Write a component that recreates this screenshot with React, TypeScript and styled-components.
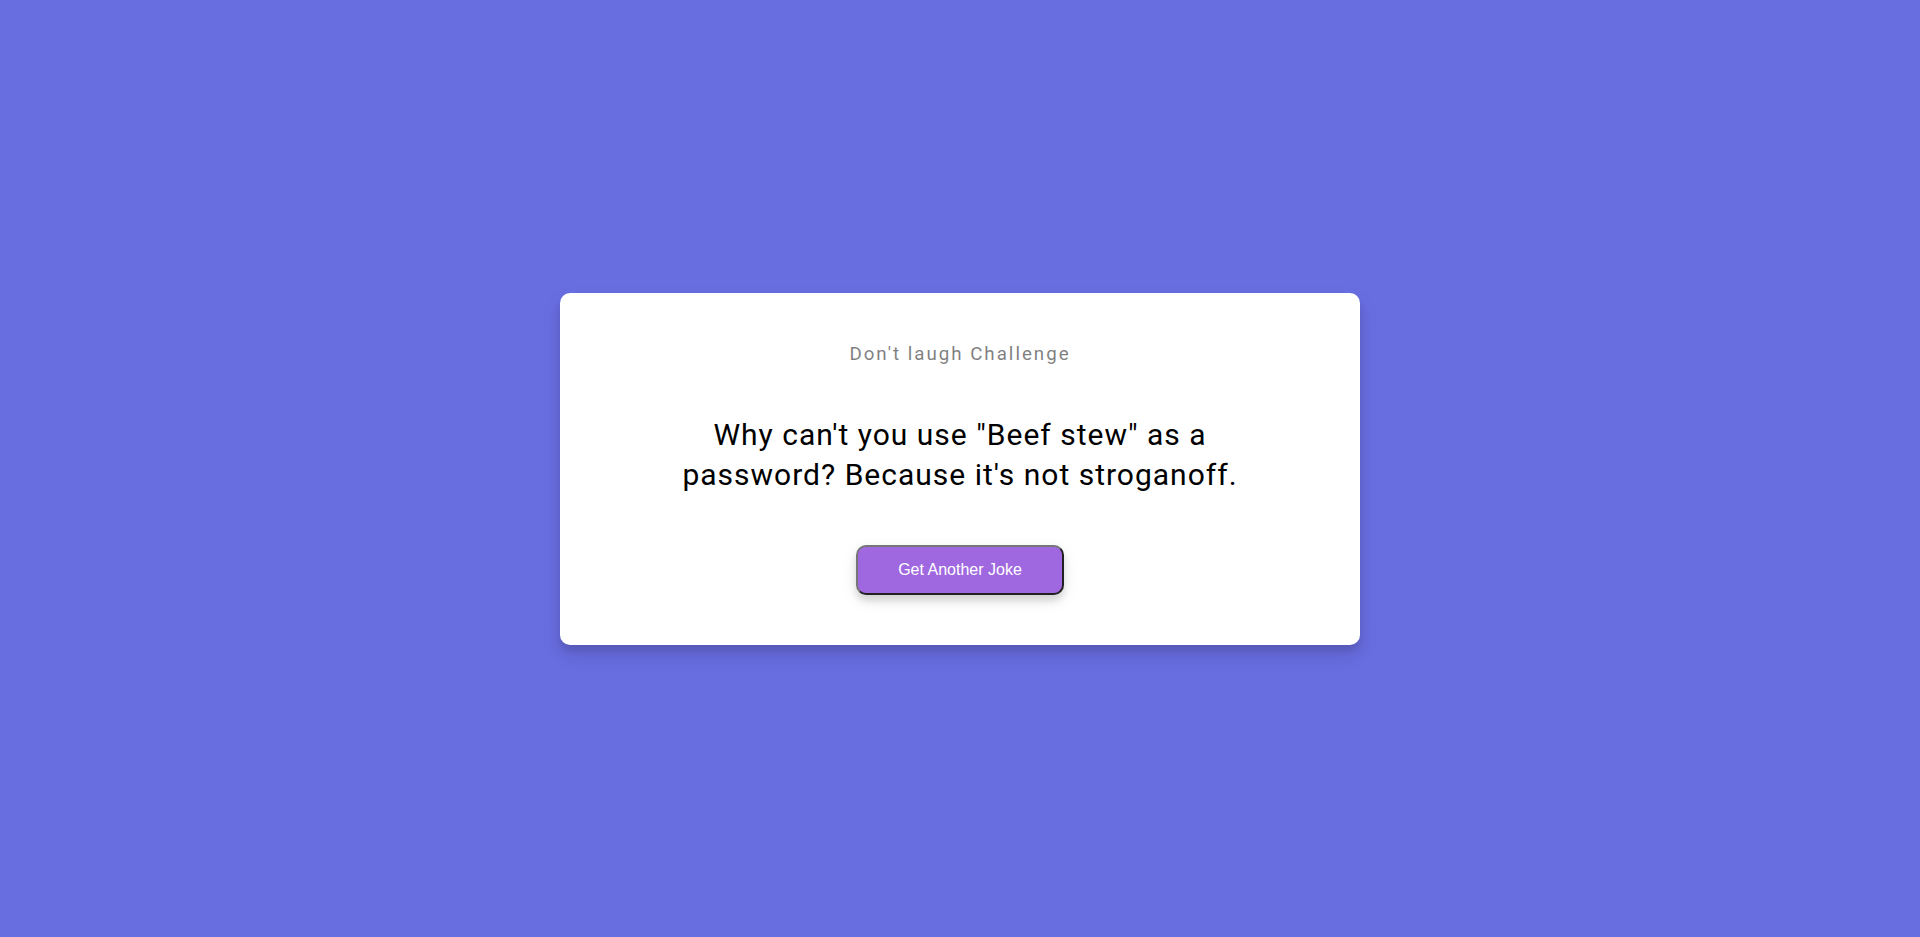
import React from "react";
import styled, { createGlobalStyle } from "styled-components";

const GlobalStyle = createGlobalStyle`
  * { box-sizing: border-box; }
  body {
    background-color: #686de0;
    font-family: Roboto, "Noto Sans", sans-serif;
    display: flex;
    flex-direction: column;
    align-items: center;
    justify-content: center;
    height: 100vh;
    overflow: hidden;
    margin: 0;
    padding: 20px;
  }
  #root {
    width: 100%;
    display: flex;
    justify-content: center;
  }
`;

const Card = styled.div`
  background-color: #fff;
  border-radius: 10px;
  box-shadow: 0 10px 20px rgba(0, 0, 0, 0.1), 0 6px 6px rgba(0, 0, 0, 0.1);
  padding: 50px 20px;
  text-align: center;
  max-width: 100%;
  width: 800px;
`;

const Title = styled.h3`
  margin: 0;
  opacity: 0.5;
  letter-spacing: 2px;
  font-size: 18.72px;
  font-weight: 400;
  color: #000;
`;

const Joke = styled.div`
  font-size: 30px;
  letter-spacing: 1px;
  line-height: 40px;
  margin: 50px auto;
  max-width: 600px;
  color: #000;
`;

const Button = styled.button`
  background-color: #9f68e0;
  color: #fff;
  border: 2px outset #767676;
  border-radius: 10px;
  box-shadow: 0 5px 15px rgba(0, 0, 0, 0.1), 0 6px 6px rgba(0, 0, 0, 0.1);
  padding: 14px 40px;
  font-family: "Liberation Sans", Arial, sans-serif;
  font-size: 16px;
  line-height: normal;
  cursor: pointer;
`;

export default function App() {
  return (
    <>
      <GlobalStyle />
      <Card>
        <Title>Don't laugh Challenge</Title>
        <Joke>
          Why can't you use "Beef stew" as a password? Because it's not
          stroganoff.
        </Joke>
        <Button>Get Another Joke</Button>
      </Card>
    </>
  );
}
